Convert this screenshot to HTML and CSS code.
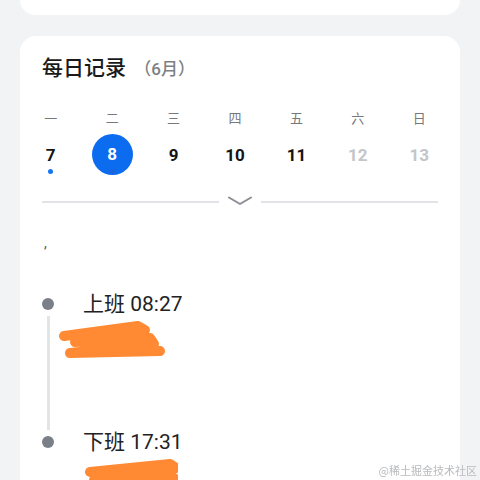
FILE: index.html
```html
<!DOCTYPE html>
<html>
<head>
  <meta charset="utf-8">
  <title>每日记录</title>
  <link rel="stylesheet" href="styles.css">
</head>
<body>

<div class="card card-top"></div>

<div class="card daily">
  <h2 class="title">每日记录 <span class="month">（6月）</span></h2>

  <div class="week">
    <div class="wd">一</div>
    <div class="wd">二</div>
    <div class="wd">三</div>
    <div class="wd">四</div>
    <div class="wd">五</div>
    <div class="wd">六</div>
    <div class="wd">日</div>

    <div class="day has-dot">7</div>
    <div class="day active has-dot"><span>8</span></div>
    <div class="day">9</div>
    <div class="day">10</div>
    <div class="day">11</div>
    <div class="day future">12</div>
    <div class="day future">13</div>
  </div>

  <div class="fold">
    <span class="fold-line"></span>
    <svg class="chevron" width="24" height="10" viewBox="0 0 24 10">
      <path d="M1 1.5 L12 8 L23 1.5" fill="none" stroke="#8a8d93" stroke-width="2" stroke-linecap="round" stroke-linejoin="round"/>
    </svg>
    <span class="fold-line"></span>
  </div>

  <div class="note">,</div>

  <div class="timeline">
    <div class="item">
      <div class="item-title">上班 08:27</div>
      <svg class="scribble" width="110" height="42" viewBox="0 0 110 42">
        <circle cx="30" cy="23" r="4" fill="none" stroke="#777" stroke-width="1"/>
        <path d="M6 16 L80 6 L87 10 L17 22 L92 18 L96 24 L12 33 L102 31" fill="none" stroke="#ff8a33" stroke-width="10" stroke-linecap="round" stroke-linejoin="round"/>
      </svg>
    </div>
    <div class="item">
      <div class="item-title">下班 17:31</div>
      <svg class="scribble" width="120" height="30" viewBox="0 0 120 30">
        <path d="M30 17 A4 4 0 0 1 32 11" fill="none" stroke="#5b8bd6" stroke-width="1"/>
        <path d="M32 14 L112 6 L118 10 L36 22 L116 20" fill="none" stroke="#ff8a33" stroke-width="10" stroke-linecap="round" stroke-linejoin="round"/>
      </svg>
    </div>
  </div>
</div>

<div class="watermark">@稀土掘金技术社区</div>

</body>
</html>
```

FILE: styles.css
```css
body {
  margin: 0;
  background: #f2f3f5;
  font-family: Roboto, "Noto Sans CJK SC", sans-serif;
  color: #1f1f1f;
  height: 480px;
  overflow: hidden;
}

.card {
  background: #ffffff;
  margin: 0 20px;
  border-radius: 16px;
}

.card-top {
  height: 15px;
  border-radius: 0 0 16px 16px;
}

.daily {
  margin-top: 21px;
  padding: 18px 22px 40px 22px;
  height: 600px;
}

.title {
  margin: 0;
  font-size: 21px;
  line-height: 28px;
  font-weight: 500;
  color: #1a1a1a;
}

.month {
  margin-left: 3px;
  font-size: 17px;
  font-weight: 500;
  color: #7d7f84;
}

.week {
  display: grid;
  grid-template-columns: repeat(7, 1fr);
  margin: 26px -12px 0 -22px;
  row-gap: 6px;
}

.wd {
  text-align: center;
  font-size: 13px;
  line-height: 20px;
  color: #76787d;
}

.day {
  position: relative;
  height: 40px;
  display: flex;
  align-items: center;
  justify-content: center;
  font-size: 17px;
  font-weight: 700;
  color: #151515;
}

.day.future {
  color: #c4c5c8;
}

.day.has-dot::after {
  content: "";
  position: absolute;
  left: 50%;
  top: 34px;
  width: 5px;
  height: 5px;
  margin-left: -2.5px;
  border-radius: 50%;
  background: #1677f0;
}

.day.active span {
  width: 41px;
  height: 41px;
  border-radius: 50%;
  background: #0b6cf0;
  color: #ffffff;
  display: flex;
  align-items: center;
  justify-content: center;
  margin-top: -2px;
}

.day.active::after {
  background: #1d63d8;
}

.fold {
  display: flex;
  align-items: center;
  gap: 9px;
  margin-top: 21px;
  height: 10px;
}

.fold-line {
  flex: 1;
  height: 2px;
  background: #e2e3e6;
  margin-top: 1px;
}

.chevron {
  display: block;
}

.note {
  margin-top: 27px;
  padding-left: 2px;
  font-size: 14px;
  line-height: 20px;
  color: #555;
  height: 20px;
}

.timeline {
  margin-top: 37px;
}

.item {
  position: relative;
  padding-left: 41px;
  height: 138px;
}

.item::before {
  content: "";
  position: absolute;
  left: 0;
  top: 8px;
  width: 12px;
  height: 12px;
  border-radius: 50%;
  background: #7b7f88;
}

.item:first-child::after {
  content: "";
  position: absolute;
  left: 4.5px;
  top: 26px;
  bottom: -2px;
  width: 3px;
  background: #e3e4e6;
}

.item-title {
  font-size: 21px;
  line-height: 28px;
  color: #222;
}

.scribble {
  display: block;
  margin-left: -25px;
  margin-top: 2px;
}

.watermark {
  position: fixed;
  right: 3px;
  bottom: 2px;
  font-family: "Noto Sans CJK SC", serif;
  font-size: 11px;
  color: #b9babd;
}
```
